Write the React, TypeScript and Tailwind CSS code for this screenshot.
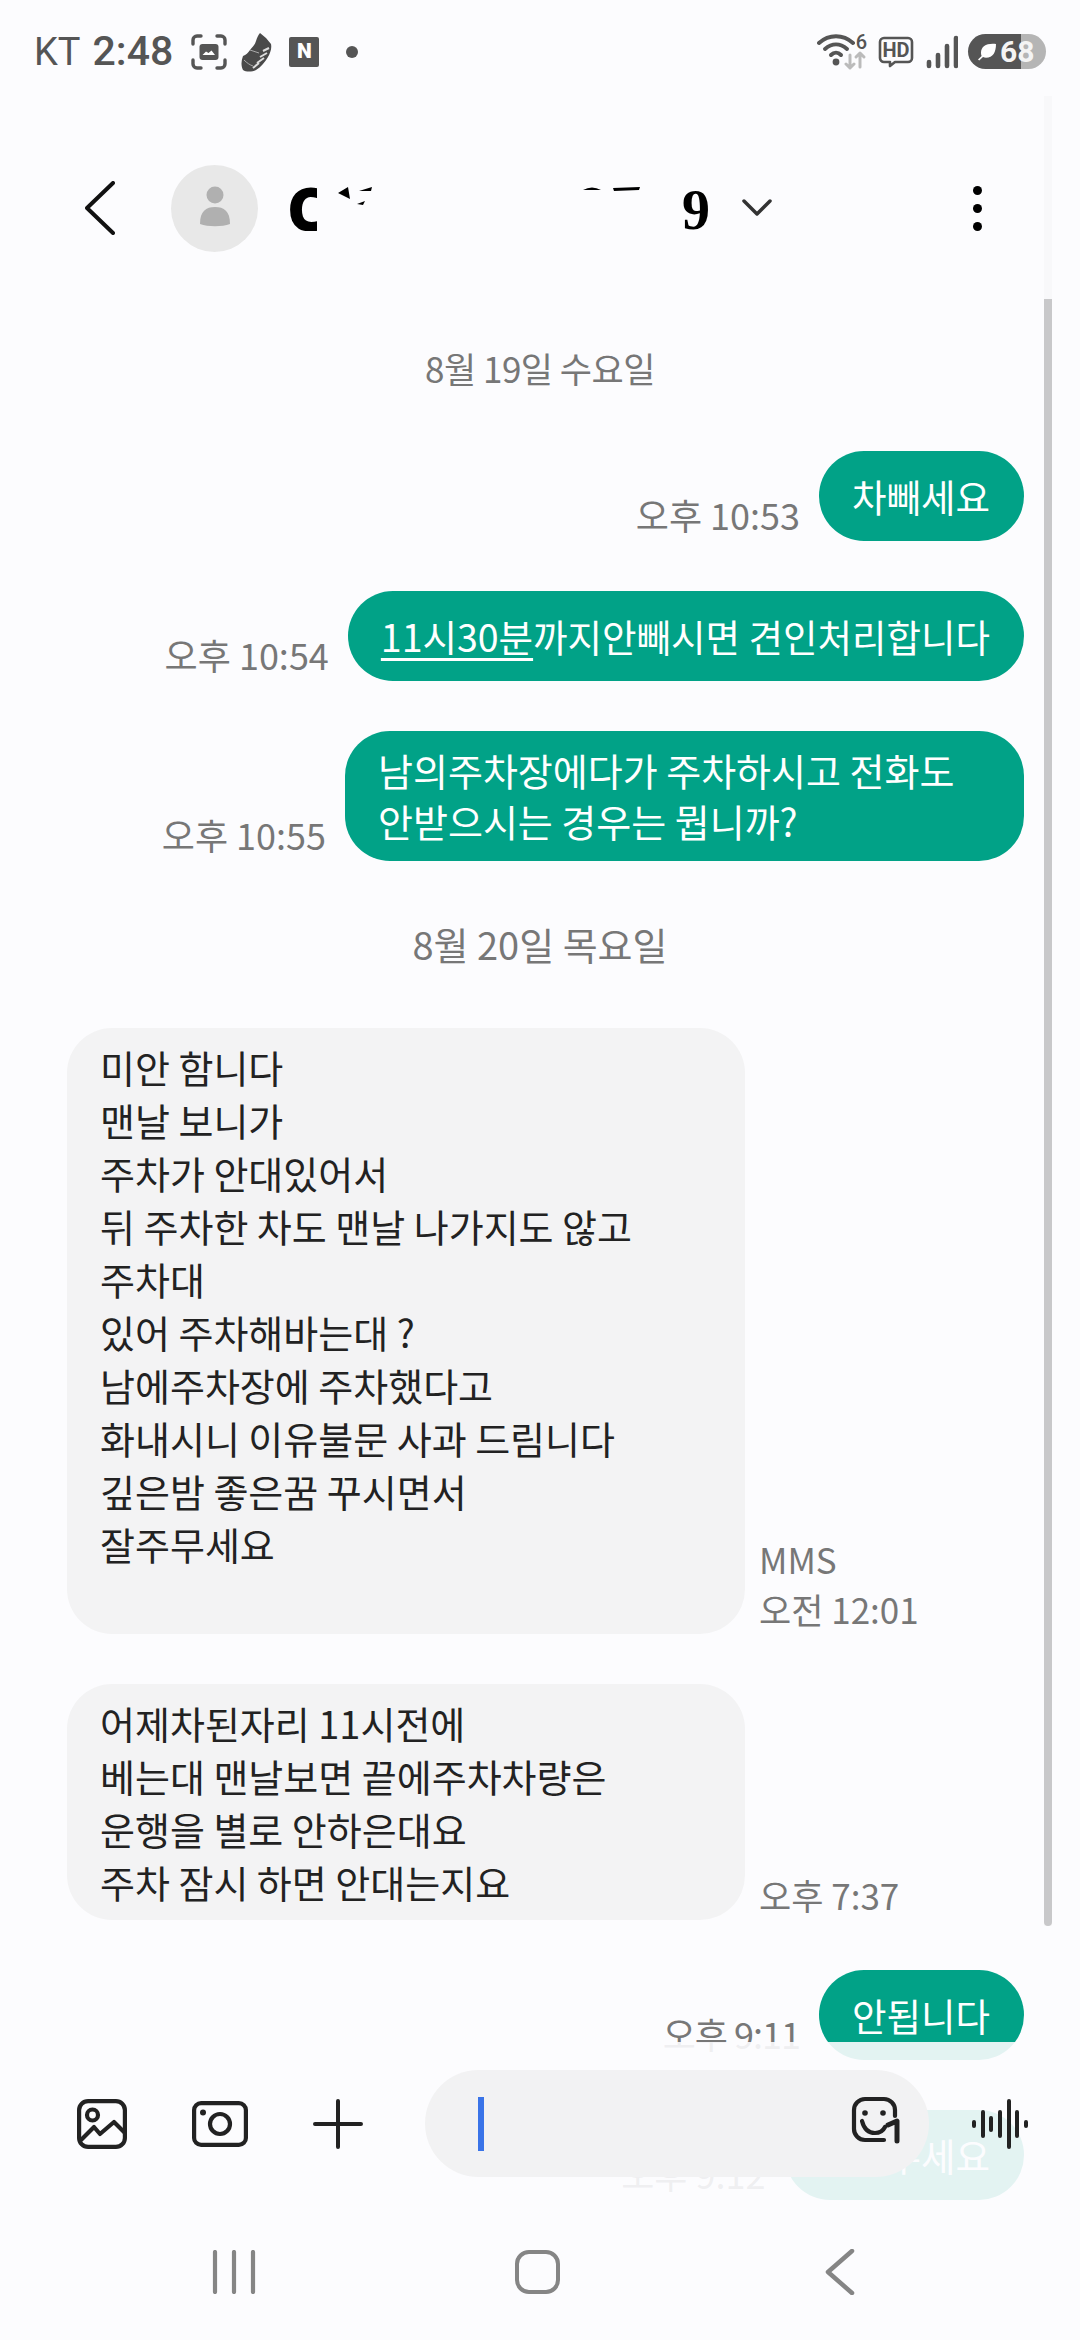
import React from 'react';

const KR = 'font-["Noto_Sans_CJK_KR",sans-serif]';

function ScreenshotIcon() {
  return (
    <svg width="36" height="36" viewBox="0 0 36 36" fill="none" stroke="#555" strokeWidth="3.4" strokeLinecap="round">
      <path d="M2 10V6a4 4 0 0 1 4-4h4M26 2h4a4 4 0 0 1 4 4v4M34 26v4a4 4 0 0 1-4 4h-4M10 34H6a4 4 0 0 1-4-4v-4" />
      <rect x="8.5" y="10" width="19" height="16" rx="3" fill="#555" stroke="none" />
      <path d="M11.5 21l3.5-3.5 2.5 1.5 3-2.5 3.5 4.5z" fill="#fff" stroke="none" />
    </svg>
  );
}

function ShoeIcon() {
  return (
    <svg width="32" height="40" viewBox="0 0 32 40" fill="none">
      <path d="M20 1l6 5 5 6c1 5-1 9-3 13-3 5-7 10-12 13-4 2-10 2-13 0-2-4-2-9 0-14 3-1 5-3 7-6 2-3 5-5 6-9 1-3 2-6 4-8z" fill="#4a4a4a" />
      <path d="M29 16l-6 3M27 21l-7 4M24 26l-7 5M19 31l-6 5" stroke="#ddd" strokeWidth="2" />
      <path d="M10 18l9 3M4 28c3 3 6 5 9 6" stroke="#aaa" strokeWidth="1" />
    </svg>
  );
}

function StatusIcons() {
  return (
    <div className="flex items-center">
      <div className="relative mr-[11px] h-[36px] w-[50px]">
        <svg width="50" height="36" viewBox="0 0 50 36" fill="none">
          <g stroke="#555" strokeWidth="4" strokeLinecap="round">
            <path d="M2 9c10-9 24-9 34 0" />
            <path d="M8 15c7-6 15-6 22 0" />
            <path d="M14 21c3-3 7-3 10 0" />
          </g>
          <circle cx="19" cy="28" r="3.4" fill="#555" />
          <g stroke="#bbb" strokeWidth="3" strokeLinecap="round" strokeLinejoin="round">
            <path d="M33 21v13M29 30l4 4 4-4" />
            <path d="M43 33V19M39 23l4-4 4 4" />
          </g>
        </svg>
        <span className="absolute right-[0px] top-[-2px] font-['Roboto',sans-serif] text-[20px] font-medium leading-[20px] text-[#555]">6</span>
      </div>
      <div className="relative mr-[12px] h-[32px] w-[36px]">
        <svg width="36" height="32" viewBox="0 0 36 32" fill="none">
          <path d="M6 2h24a4 4 0 0 1 4 4v16a4 4 0 0 1-4 4H17l-5 4v-4H6a4 4 0 0 1-4-4V6a4 4 0 0 1 4-4z" stroke="#555" strokeWidth="2.6" strokeLinejoin="round" />
        </svg>
        <span className="absolute inset-x-0 top-[3px] text-center font-['Roboto',sans-serif] text-[20px] font-bold leading-[22px] text-[#555]">HD</span>
      </div>
      <svg width="32" height="34" viewBox="0 0 32 34" fill="none" stroke="#555" strokeWidth="4.600" strokeLinecap="round" className="mr-[10px]">
        <path d="M3 27v4M12 20v11M21 11v20M30 3v28" />
      </svg>
      <div className="flex h-[35px] w-[78px] items-center rounded-full bg-[linear-gradient(90deg,#555_53px,#b5b5b5_53px)] pl-[9px]">
        <svg width="20" height="18" viewBox="0 0 20 18" className="mr-[3px]">
          <path d="M19 1C10 0 4 3 4 10c0 1 .2 2 .6 3L1 16.500l1.200 1L6 14c1 .6 2 .8 3 .8C16 14.800 19 9 19 1z" fill="#fff" />
        </svg>
        <span className="font-['Roboto',sans-serif] text-[30px] font-bold leading-none text-[#f4f4f4]">68</span>
      </div>
    </div>
  );
}

function StatusBar() {
  return (
    <div className="flex h-[102px] shrink-0 items-center justify-between pl-[34px] pr-[34px] pt-px">
      <div className="flex items-center">
        <span className="font-['Roboto',sans-serif] text-[38px] leading-none text-[#555]">KT</span>
        <span className="ml-[12px] mr-[18px] font-['Roboto',sans-serif] text-[41px] font-medium leading-none text-[#555]">2:48</span>
        <ScreenshotIcon />
        <span className="ml-[13px] mr-[17px] flex"><ShoeIcon /></span>
        <span className="flex h-[30px] w-[30px] items-center justify-center rounded-[2px] bg-[#555] font-['Roboto',sans-serif] text-[21px] font-black leading-none text-white">N</span>
        <span className="ml-[27px] h-[12px] w-[12px] rounded-full bg-[#555]" />
      </div>
      <StatusIcons />
    </div>
  );
}

function Header() {
  return (
    <div className="flex h-[212px] shrink-0 items-center pl-[85px]">
      <svg width="30" height="54" viewBox="0 0 30 54" fill="none" stroke="#111" strokeWidth="4" strokeLinecap="round" strokeLinejoin="round">
        <path d="M28 2L2 27l26 25" />
      </svg>
      <div className="ml-[56px] flex h-[87px] w-[87px] items-center justify-center rounded-full bg-[#e8e8e8]">
        <svg width="30" height="44" viewBox="0 0 30 44" fill="#b0b0b0">
          <circle cx="15" cy="9" r="8.500" />
          <path d="M0 38c0-13 6-17 15-17s15 4 15 17c-8 3-22 3-30 0z" />
        </svg>
      </div>
      {/* the name is scribbled out in the picture, only scraps are left */}
      <div className="ml-[29px] flex h-[46px] w-[423px] items-start">
        <span className="h-[46px] w-[30px] overflow-hidden font-['Noto_Sans',sans-serif] text-[60px] font-black leading-[46px] text-black">C</span>
        <svg width="52" height="24" viewBox="0 0 52 24" className="ml-[18px]">
          <path d="M3 8L13 2l2 12zM24 6l13-4-1 4zM22 19l8-3-2 4z" fill="#000" />
        </svg>
        <svg width="58" height="8" viewBox="0 0 58 8" className="ml-[196px]">
          <path d="M0 5Q9 0 18 5zM30 3l27-1-1 3-25 1z" fill="#000" />
        </svg>
        <div className="ml-auto flex h-[46px] w-[31px] justify-end overflow-hidden">
          <span className="font-['Liberation_Serif',serif] text-[56px] font-bold leading-[50px] text-black">9</span>
        </div>
      </div>
      <svg width="30" height="18" viewBox="0 0 30 18" fill="none" stroke="#333" strokeWidth="3.500" strokeLinecap="round" strokeLinejoin="round" className="ml-[32px]">
        <path d="M2 2l13 13L28 2" />
      </svg>
      <div className="ml-[201px] flex flex-col gap-[9px]">
        <span className="h-[9px] w-[9px] rounded-full bg-black" />
        <span className="h-[9px] w-[9px] rounded-full bg-black" />
        <span className="h-[9px] w-[9px] rounded-full bg-black" />
      </div>
    </div>
  );
}

function SentRow({ time, timeClass, className, children }: { time: string; timeClass?: string; className?: string; children: React.ReactNode }) {
  return (
    <div className="flex items-end justify-end gap-[19px] pr-[56px]">
      <span className={`mb-[5px] text-[36px] leading-[44px] text-[#777] ${timeClass ?? ''}`}>{time}</span>
      <div className={`rounded-[45px] bg-[#01a287] pl-[33px] pr-[34px] leading-[51px] text-white ${className ?? 'pb-[20.5px] pt-[18.5px] text-[37.5px]'}`}>
        {children}
      </div>
    </div>
  );
}

function ReceivedRow({ lines, meta, bottom }: { lines: string[]; meta: string[]; bottom: string }) {
  return (
    <div className="flex items-end gap-[14px] pl-[67px]">
      <div className={`w-[678px] rounded-[45px] bg-[#f3f3f4] pl-[33px] pt-[11.5px] text-[38px] leading-[53px] text-[#222] ${bottom}`}>
        {lines.map((l) => (
          <div key={l}>{l}</div>
        ))}
      </div>
      <div className="flex flex-col text-[35px] leading-[50px] text-[#777]">
        {meta.map((m) => (
          <span key={m}>{m}</span>
        ))}
      </div>
    </div>
  );
}

function Messages() {
  return (
    <div className={`flex flex-col ${KR}`}>
      <div className="mt-[29px] text-center text-[35px] leading-[50px] tracking-[-0.5px] text-[#777]">8월 19일 수요일</div>
      <div className="mt-[58px] flex flex-col gap-[50px]">
        <SentRow time="오후 10:53">차빼세요</SentRow>
        <SentRow time="오후 10:54">
          <span className="underline decoration-[3px] underline-offset-[6px]">11시30분</span>까지안빼시면 견인처리합니다
        </SentRow>
        <SentRow time="오후 10:55" className="w-[679px] pb-[15px] pt-[13px] text-[38px]">
          <div>남의주차장에다가 주차하시고 전화도</div>
          <div>안받으시는 경우는 뭡니까?</div>
        </SentRow>
      </div>
      <div className="mt-[58px] text-center text-[38px] leading-[50px] text-[#777]">8월 20일 목요일</div>
      <div className="mt-[59px] flex flex-col gap-[50px]">
        <ReceivedRow
          lines={['미안 함니다', '맨날 보니가', '주차가 안대있어서', '뒤 주차한 차도 맨날 나가지도 않고', '주차대', '있어 주차해바는대 ?', '남에주차장에 주차했다고', '화내시니 이유불문 사과 드림니다', '깊은밤 좋은꿈 꾸시면서', '잘주무세요']}
          meta={['MMS', '오전 12:01']}
          bottom="pb-[64.5px]"
        />
        <ReceivedRow
          lines={['어제차된자리 11시전에', '베는대 맨날보면 끝에주차차량은', '운행을 별로 안하은대요', '주차 잠시 하면 안대는지요']}
          meta={['오후 7:37']}
          bottom="pb-[12.5px]"
        />
      </div>
      <div className="mt-[50px] flex flex-col gap-[50px]">
        <SentRow time="오후 9:11" timeClass="tracking-[-1px]">안됩니다</SentRow>
        <SentRow time="오후 9:12">차빼주세요</SentRow>
      </div>
    </div>
  );
}

function Composer() {
  return (
    <div className="absolute inset-x-0 bottom-0 flex h-[298px] flex-col bg-[#fcfcfe]/90 pt-[28px]">
      <div className="flex h-[107px] items-center pl-[77px]">
        <svg width="50" height="50" viewBox="0 0 50 50" fill="none" stroke="#222" strokeWidth="4.200" strokeLinejoin="round" strokeLinecap="round">
          <rect x="2.100" y="2.100" width="45.800" height="45.800" rx="9" />
          <circle cx="15.500" cy="16" r="5.500" />
          <path d="M4 41l13-13 6 7 14-12 11 11" />
        </svg>
        <svg width="56" height="46" viewBox="0 0 56 46" fill="none" stroke="#222" strokeWidth="4.200" className="ml-[65px]">
          <rect x="2.100" y="2.100" width="51.800" height="41.800" rx="7" />
          <circle cx="28" cy="23" r="10" />
          <circle cx="11" cy="11.500" r="3" fill="#222" stroke="none" />
        </svg>
        <svg width="50" height="50" viewBox="0 0 50 50" fill="none" stroke="#222" strokeWidth="4" strokeLinecap="round" className="ml-[65px]">
          <path d="M25 2v46M2 25h46" />
        </svg>
        <div className="ml-[62px] flex h-[107px] w-[504px] items-center justify-between rounded-full bg-[#f2f2f3] pl-[53px] pr-[28px]">
          <span className="h-[54px] w-[6px] bg-[#3a74e8]" />
          <svg width="50" height="48" viewBox="0 0 50 48" fill="none" stroke="#222" strokeWidth="4.200" strokeLinecap="round" strokeLinejoin="round" className="mb-[8px]">
            <path d="M33 44H14A11 11 0 0 1 3 33V14A11 11 0 0 1 14 3h19a11 11 0 0 1 11 11v6" />
            <path d="M11 25q3 12 13 12 7 0 10-6" />
            <path d="M37 29l9-4v20" strokeWidth="5" />
            <circle cx="14" cy="17" r="2.800" fill="#222" stroke="none" />
            <circle cx="32" cy="17" r="2.800" fill="#222" stroke="none" />
          </svg>
        </div>
        <svg width="58" height="50" viewBox="0 0 58 50" fill="none" stroke="#222" strokeWidth="4" strokeLinecap="round" className="ml-[42px]">
          <path d="M3 23v4M12 13v24M20 19v12M29 13v24M38 2v46M46 13v24M55 23v4" />
        </svg>
      </div>
      <div className="mt-[72px] grid grid-cols-[repeat(3,303px)] items-center justify-center pr-[6px]">
        <svg width="44" height="44" viewBox="0 0 44 44" fill="none" stroke="#858585" strokeWidth="4.200" strokeLinecap="round" className="justify-self-center">
          <path d="M3 2v40M22 2v40M41 2v40" />
        </svg>
        <div className="h-[44px] w-[45px] justify-self-center rounded-[14px] border-[4.500px] border-[#858585]" />
        <svg width="30" height="46" viewBox="0 0 30 46" fill="none" stroke="#858585" strokeWidth="4.500" strokeLinecap="round" strokeLinejoin="round" className="justify-self-center">
          <path d="M27 2L3 23l24 21" />
        </svg>
      </div>
    </div>
  );
}

export default function App() {
  return (
    <div className="relative flex h-[2340px] w-[1080px] flex-col overflow-hidden bg-[#fcfcfe]">
      <StatusBar />
      <Header />
      <Messages />
      {/* scrollbar track and thumb */}
      <div className="absolute left-[1044px] top-[96px] flex h-[1830px] w-[8px] flex-col bg-[#f8f8fa]">
        <div className="mt-[203px] flex-1 rounded-b-full bg-[#c8c8ca]" />
      </div>
      <Composer />
    </div>
  );
}
